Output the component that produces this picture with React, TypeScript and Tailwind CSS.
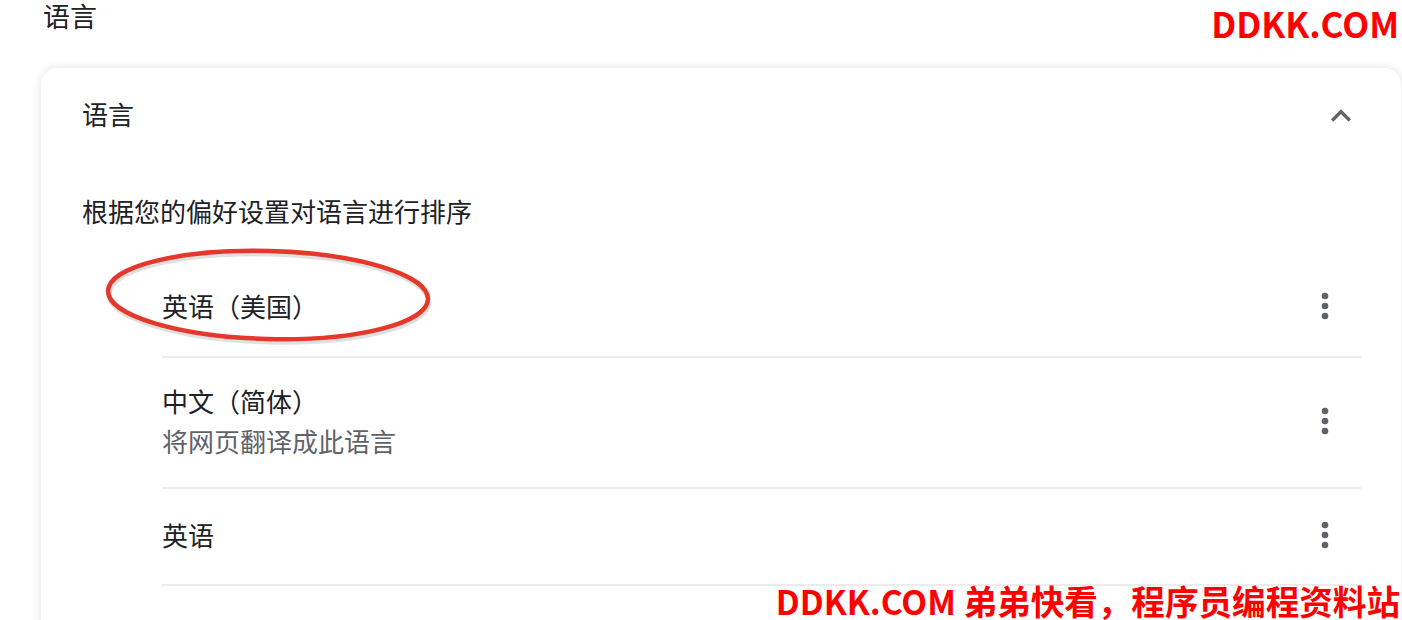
import React from "react";

const font = `"Noto Sans CJK SC", "Noto Sans", sans-serif`;

function MoreVert() {
	return (
		<svg viewBox="0 0 24 24" className="h-10 w-10 fill-[#5f6368]" aria-hidden="true">
			<circle cx="12" cy="6" r="2" />
			<circle cx="12" cy="12" r="2" />
			<circle cx="12" cy="18" r="2" />
		</svg>
	);
}

function ExpandLess() {
	return (
		<svg viewBox="0 0 24 24" className="h-10 w-10 fill-[#5f6368]" aria-hidden="true">
			<path d="M12 8l-6 6 1.41 1.41L12 10.83l4.59 4.58L18 14z" />
		</svg>
	);
}

const languages = [
	{ name: "英语（美国）", note: "", rowClass: "h-[99px] pb-[3px]" },
	{ name: "中文（简体）", note: "将网页翻译成此语言", rowClass: "h-[131px] pb-[4px]" },
	{ name: "英语", note: "", rowClass: "h-[97px] pb-[3px]" },
];

export default function App() {
	return (
		<div
			className="relative h-[620px] w-[1402px] overflow-hidden bg-white text-[#202124]"
			style={{ fontFamily: font }}
		>
			<div className="pl-[43px] pt-[2px] text-[27px] leading-[28px]">语言</div>

			<div className="ml-[41px] mt-[38px] h-[600px] w-[1360px] rounded-[16px] bg-white pl-[41px] pr-[40px] shadow-[0_0_8px_rgba(0,0,0,0.13)]">
				<div className="flex h-[96px] items-center justify-between">
					<span className="mb-[6px] text-[26px]">语言</span>
					<ExpandLess />
				</div>
				<div className="flex h-[95px] items-center pb-[2px] text-[26px]">
					根据您的偏好设置对语言进行排序
				</div>
				<div className="ml-[80px]">
					{languages.map((lang) => (
						<div
							key={lang.name}
							className={`flex items-center justify-between border-b-2 border-[#ececec] pr-[16px] ${lang.rowClass}`}
						>
							<div className="flex flex-col">
								<span className="text-[26px] leading-[40px]">{lang.name}</span>
								{lang.note && (
									<span className="text-[26px] leading-[40px] text-[#5f6368]">{lang.note}</span>
								)}
							</div>
							<MoreVert />
						</div>
					))}
				</div>
			</div>

			{/* annotation */}
			<svg
				className="pointer-events-none absolute left-[100px] top-[245px]"
				width="340"
				height="105"
				viewBox="0 0 340 105"
			>
				<ellipse
					cx="169"
					cy="53"
					rx="160"
					ry="44"
					transform="rotate(1.5 169 53)"
					fill="none"
					stroke="rgba(0,0,0,0.12)"
					strokeWidth="5"
				/>
				<ellipse
					cx="168"
					cy="50"
					rx="160"
					ry="44"
					transform="rotate(1.5 168 50)"
					fill="none"
					stroke="#e5372a"
					strokeWidth="4.5"
				/>
			</svg>

			<div className="absolute right-[3px] top-[5px] text-[35px] font-bold leading-[36px] text-[#ff0000]">
				DDKK.COM
			</div>
			<div className="absolute right-[2px] top-[583px] text-[33.6px] font-bold leading-[36px] text-[#ff0000]">
				DDKK.COM 弟弟快看，程序员编程资料站
			</div>
		</div>
	);
}
